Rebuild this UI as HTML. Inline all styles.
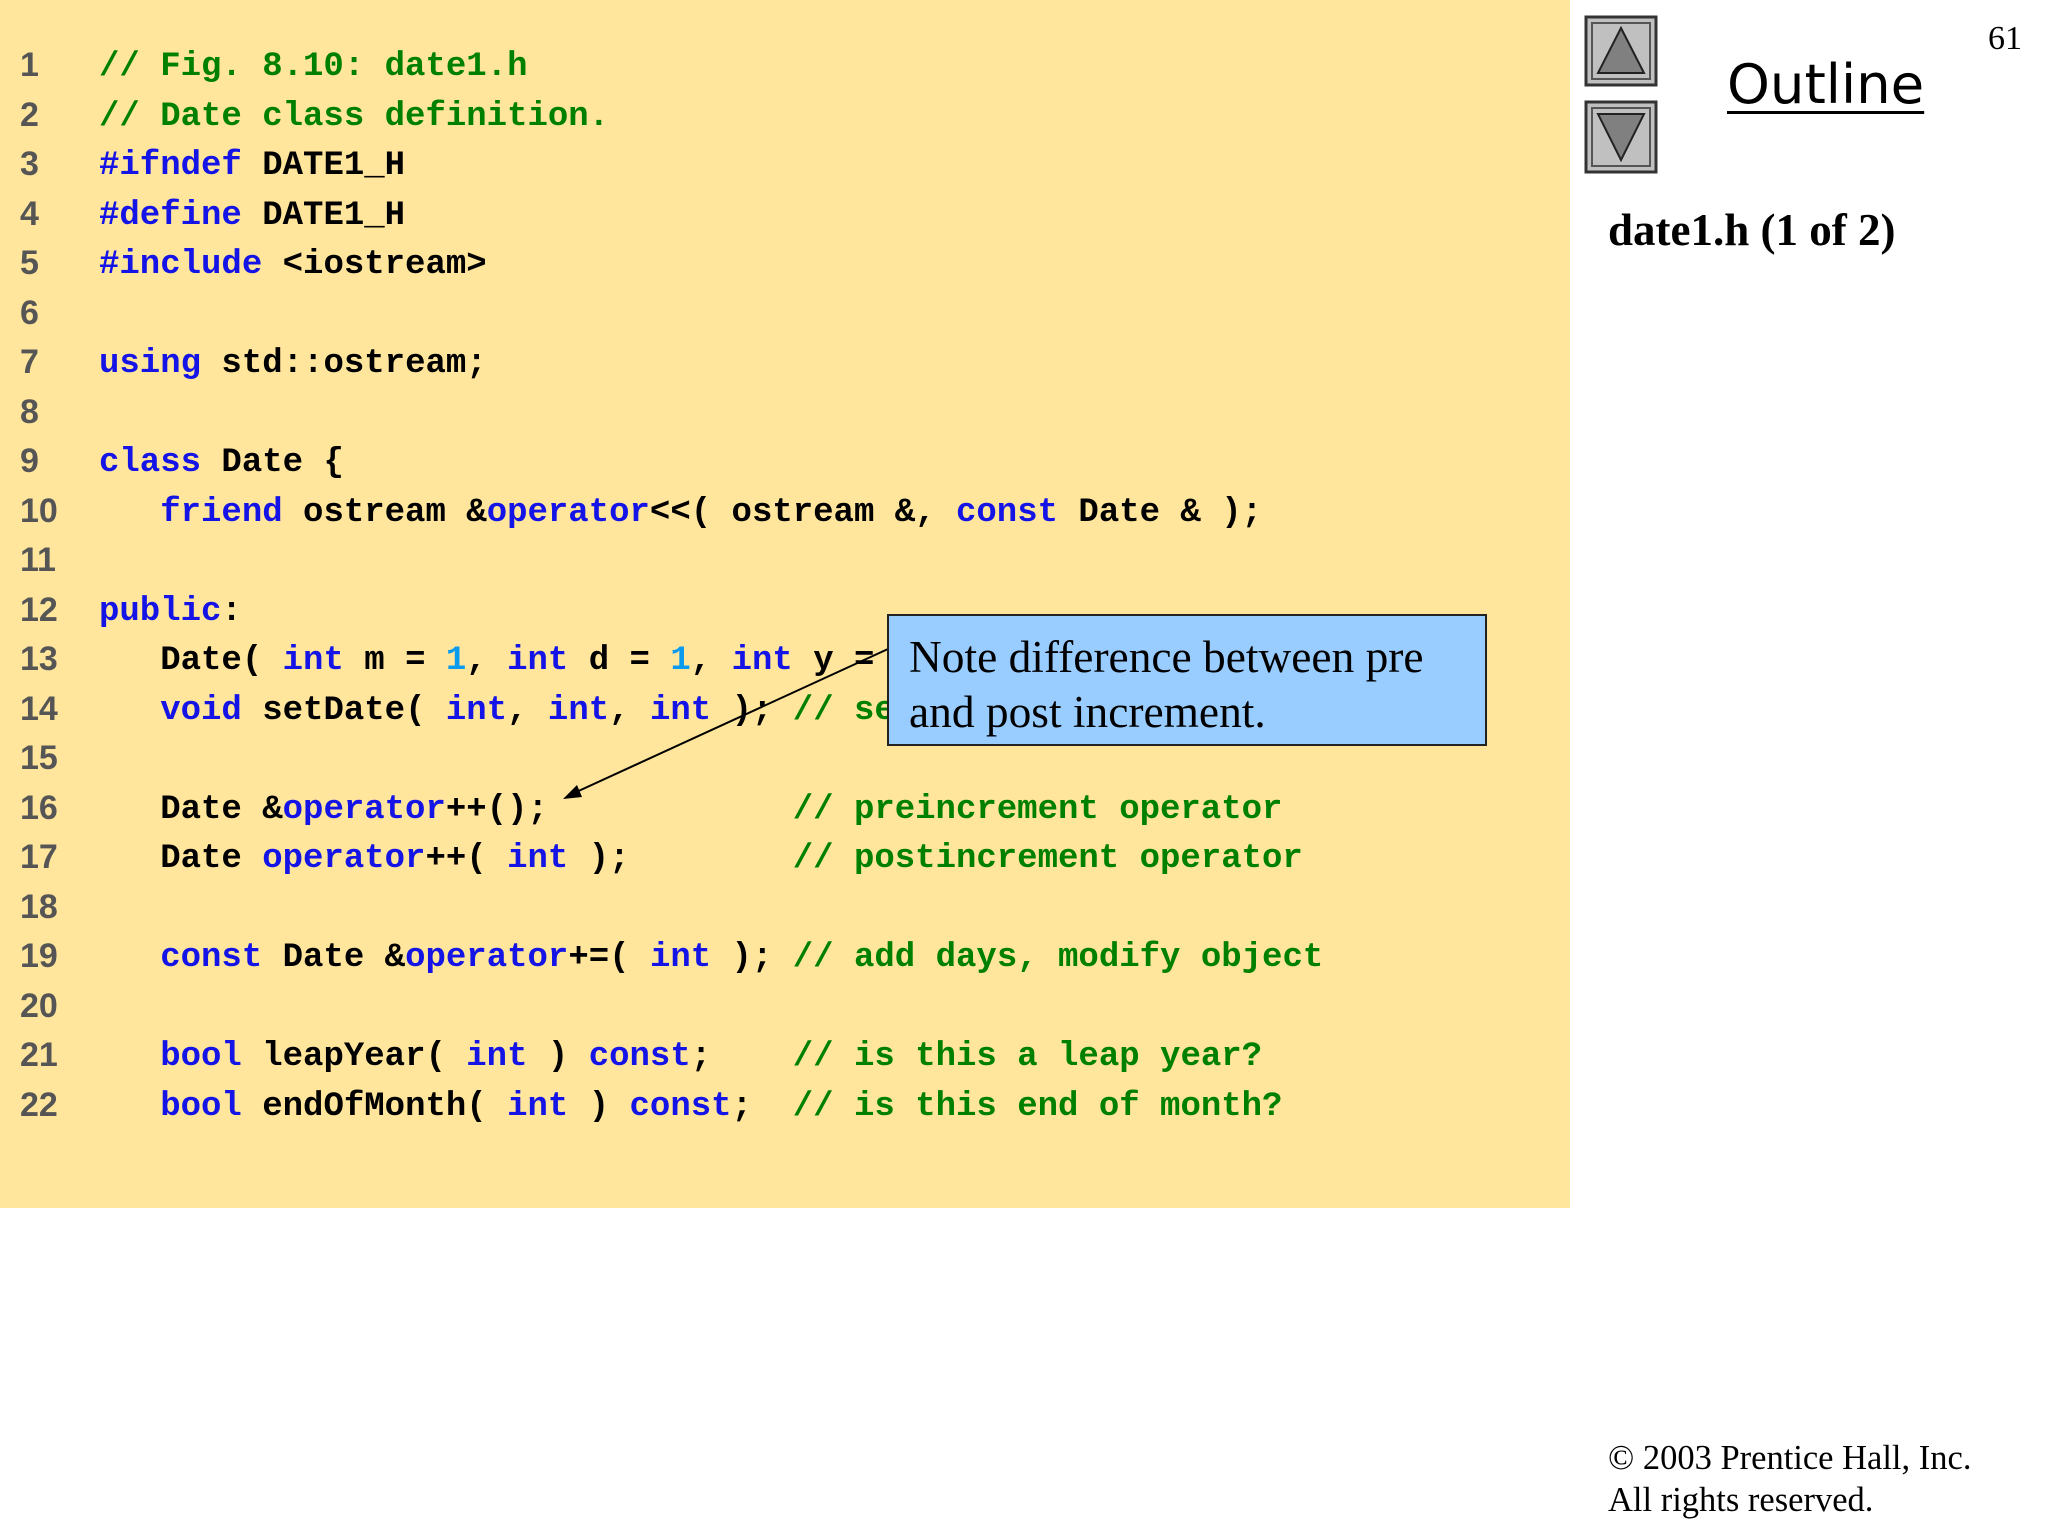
<!DOCTYPE html>
<html><head><meta charset="utf-8"><style>
html,body{margin:0;padding:0}
body{width:2048px;height:1536px;background:#fff;position:relative;overflow:hidden}
.panel{position:absolute;left:0;top:0;width:1570px;height:1208px;background:#FFE69C}
pre{position:absolute;margin:0;font-family:"Liberation Mono",monospace;font-weight:bold;font-size:34px;line-height:49.5px}
.code{left:99px;top:43px;color:#000}
.nums{left:20px;top:41px;font-family:"Liberation Sans",sans-serif;color:#555;font-weight:bold;font-size:34px}
.g{color:#008000}.b{color:#1414E6}.c{color:#0A9BEF}
.box{position:absolute;left:887px;top:614px;width:596px;height:128px;background:#99CCFF;border:2px solid #222;box-sizing:content-box}
.box div{position:absolute;left:20px;top:14px;font-family:"Liberation Serif",serif;font-size:45.4px;line-height:55px;color:#000;white-space:nowrap}
.t{position:absolute;font-family:"Liberation Serif",serif;color:#000;white-space:nowrap}
</style></head><body>
<div class="panel"></div>
<pre class="nums">1
2
3
4
5
6
7
8
9
10
11
12
13
14
15
16
17
18
19
20
21
22</pre>
<pre class="code"><span class="g">// Fig. 8.10: date1.h</span>
<span class="g">// Date class definition.</span>
<span class="b">#ifndef</span> DATE1_H
<span class="b">#define</span> DATE1_H
<span class="b">#include</span> &lt;iostream&gt;

<span class="b">using</span> std::ostream;

<span class="b">class</span> Date {
   <span class="b">friend</span> ostream &amp;<span class="b">operator</span>&lt;&lt;( ostream &amp;, <span class="b">const</span> Date &amp; );

<span class="b">public</span>:
   Date( <span class="b">int</span> m = <span class="c">1</span>, <span class="b">int</span> d = <span class="c">1</span>, <span class="b">int</span> y = <span class="c">1900</span> ); <span class="g">// constructor</span>
   <span class="b">void</span> setDate( <span class="b">int</span>, <span class="b">int</span>, <span class="b">int</span> ); <span class="g">// set the date</span>

   Date &amp;<span class="b">operator</span>++();            <span class="g">// preincrement operator</span>
   Date <span class="b">operator</span>++( <span class="b">int</span> );        <span class="g">// postincrement operator</span>

   <span class="b">const</span> Date &amp;<span class="b">operator</span>+=( <span class="b">int</span> ); <span class="g">// add days, modify object</span>

   <span class="b">bool</span> leapYear( <span class="b">int</span> ) <span class="b">const</span>;    <span class="g">// is this a leap year?</span>
   <span class="b">bool</span> endOfMonth( <span class="b">int</span> ) <span class="b">const</span>;  <span class="g">// is this end of month?</span></pre>
<svg style="position:absolute;left:0;top:0" width="2048" height="1536">
<line x1="888" y1="649" x2="572" y2="794" stroke="#000" stroke-width="2"/>
<polygon points="563,799 577,785 582,797" fill="#000"/>
<g>
<rect x="1586" y="17" width="70" height="68" fill="#C0C0C0" stroke="#333" stroke-width="3"/>
<rect x="1592" y="23" width="58" height="56" fill="none" stroke="#555" stroke-width="2"/>
<polygon points="1621,28 1598,73 1644,73" fill="#808080" stroke="#222" stroke-width="2"/>
<rect x="1586" y="102" width="70" height="70" fill="#C0C0C0" stroke="#333" stroke-width="3"/>
<rect x="1592" y="108" width="58" height="58" fill="none" stroke="#555" stroke-width="2"/>
<polygon points="1598,114 1644,114 1621,160" fill="#808080" stroke="#222" stroke-width="2"/>
</g>
</svg>
<div class="box"><div>Note difference between pre<br>and post increment.</div></div>
<div class="t" style="left:1727px;top:52px;font-family:'DejaVu Sans','Liberation Sans',sans-serif;font-size:54.5px;text-decoration:underline;text-decoration-thickness:3px;text-underline-offset:8px">Outline</div>
<div class="t" style="left:1988px;top:20px;font-size:34px">61</div>
<div class="t" style="left:1608px;top:204px;font-size:45px;font-weight:bold">date1.h (1 of 2)</div>
<div class="t" style="left:1608px;top:1437px;font-size:34.5px;line-height:42px">© 2003 Prentice Hall, Inc.<br>All rights reserved.</div>
</body></html>
